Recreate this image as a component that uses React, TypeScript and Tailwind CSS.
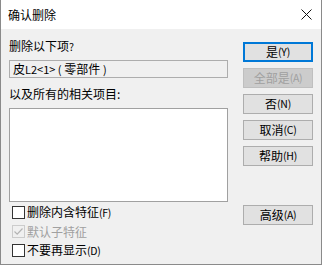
import React from "react";

const font = { fontFamily: '"Noto Sans CJK SC", "Noto Sans", sans-serif' };

function Btn({ label, key2, variant }: { label: string; key2: string; variant?: "default" | "disabled" }) {
  const base = "h-[20px] w-[70px] flex items-center justify-center text-[12px] leading-none";
  const cls =
    variant === "default"
      ? "border-2 border-[#0078d7] bg-[#e1e1e1] text-black"
      : variant === "disabled"
      ? "border border-[#bfbfbf] bg-[#cccccc] text-[#a0a0a0]"
      : "border border-[#adadad] bg-[#e1e1e1] text-black";
  return (
    <div className={`${base} ${cls}`}>
      <span>{label}</span>
      <span className="text-[10.5px] tracking-[-0.3px]">{key2}</span>
    </div>
  );
}

function Check({ label, key2, checked, disabled }: { label: string; key2?: string; checked?: boolean; disabled?: boolean }) {
  return (
    <div className="h-[19px] flex items-center pl-[3px]">
      <div
        className={`w-[13px] h-[13px] border flex items-center justify-center ${
          disabled ? "border-[#cccccc] bg-[#f0f0f0]" : "border-[#333333] bg-white"
        }`}
      >
        {checked && (
          <svg width="11" height="11" viewBox="0 0 11 11">
            <path d="M1.5 5.5 L4.2 8.2 L9.5 2.5" fill="none" stroke="#b4b4b4" strokeWidth="1.2" />
          </svg>
        )}
      </div>
      <span className={`ml-[2px] text-[12px] leading-none ${disabled ? "text-[#a0a0a0]" : "text-black"}`}>
        {label}
        {key2 && <span className="text-[10.5px] tracking-[-0.3px]">{key2}</span>}
      </span>
    </div>
  );
}

export default function App() {
  return (
    <div className="w-[322px] h-[265px] flex flex-col border-x border-b border-[#8a8a8a] bg-[#f0f0f0]" style={font}>
      <div className="h-[29px] bg-white flex items-center justify-between pl-[7px] pr-[9px]">
        <span className="text-[12px] text-black leading-none">确认删除</span>
        <svg width="11" height="11" viewBox="0 0 11 11">
          <path d="M0.5 0.5 L10.5 10.5 M10.5 0.5 L0.5 10.5" stroke="#111" strokeWidth="1" />
        </svg>
      </div>
      <div className="flex pl-[8px]">
        <div className="w-[219px] flex flex-col">
          <div className="mt-[9px] h-[16px] leading-[16px] text-[12px] text-black">
            删除以下项<span className="text-[10.5px]">?</span>
          </div>
          <div className="mt-[6px] h-[18px] border border-[#adadad] bg-[#f0f0f0] flex items-center pl-[3px] text-[12px] leading-none text-black">
            皮<span className="text-[11px]">L2&lt;1&gt; (</span>&nbsp;零部件&nbsp;<span className="text-[11px]">)</span>
          </div>
          <div className="mt-[8px] h-[16px] leading-[16px] text-[12px] text-black">以及所有的相关项目:</div>
          <div className="mt-[6px] h-[94px] border border-[#a0a0a0] bg-white" />
          <div className="mt-[1px] flex flex-col">
            <Check label="删除内含特征" key2="(F)" />
            <Check label="默认子特征" checked disabled />
            <Check label="不要再显示" key2="(D)" />
          </div>
        </div>
        <div className="ml-[15px] flex flex-col">
          <div className="mt-[13px] flex flex-col gap-[6px]">
            <Btn label="是" key2="(Y)" variant="default" />
            <Btn label="全部是" key2="(A)" variant="disabled" />
            <Btn label="否" key2="(N)" />
            <Btn label="取消" key2="(C)" />
            <Btn label="帮助" key2="(H)" />
          </div>
          <div className="mt-[39px]">
            <Btn label="高级" key2="(A)" />
          </div>
        </div>
      </div>
    </div>
  );
}
